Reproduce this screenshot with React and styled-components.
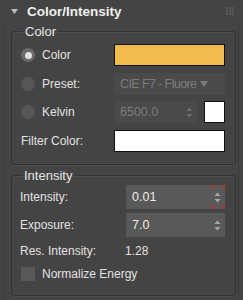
import React from "react"
import styled, { createGlobalStyle } from "styled-components"

const GlobalStyle = createGlobalStyle`
  html, body {
    margin: 0;
    padding: 0;
    background: #444444;
    font-family: "Liberation Sans", Arial, sans-serif;
  }
`

const Rollout = styled.div`
  width: 243px;
  height: 300px;
  background: #444444;
  color: #e2e2e2;
  font-size: 12px;
  box-sizing: border-box;
  overflow: hidden;
`

const Header = styled.div`
  height: 22px;
  display: flex;
  align-items: center;
  padding: 0 9px 0 11px;
  gap: 9px;
  font-weight: bold;
  font-size: 13.5px;
  color: #f0f0f0;
`

const Title = styled.span`
  flex: 1;
`

const Body = styled.div`
  margin: 0 4px;
  border-left: 1px solid #3b3b3b;
  border-right: 1px solid #3b3b3b;
  padding: 3px 2px 0 6px;
  display: flex;
  flex-direction: column;
  gap: 4px;
  height: 278px;
  box-sizing: border-box;
`

const Group = styled.fieldset`
  margin: 0;
  border: 1px solid #333333;
  border-radius: 3px;
  box-shadow: 0 1px 0 #4e4e4e, inset 0 1px 0 #4e4e4e;
  padding: ${p => p.$pad};
  display: flex;
  flex-direction: column;
  gap: ${p => p.$gap}px;
  min-width: 0;
`

const Legend = styled.legend`
  padding: 0 3px 0 2px;
  margin-left: 2px;
  font-size: 13px;
  color: #e6e6e6;
  line-height: 13px;
`

const Row = styled.div`
  display: flex;
  align-items: center;
  height: ${p => p.$h || 22}px;
`

const Radio = styled.span`
  width: 14px;
  height: 14px;
  border-radius: 50%;
  background: ${p => (p.$on ? "#6a6a6a" : "#565656")};
  display: flex;
  align-items: center;
  justify-content: center;
  margin-right: 7px;
  flex: none;

  &::after {
    content: "";
    width: 7px;
    height: 7px;
    border-radius: 50%;
    background: ${p => (p.$on ? "#e4e4e4" : "transparent")};
  }
`

const Label = styled.span`
  width: ${p => p.$w}px;
  flex: none;
  white-space: nowrap;
`

const Swatch = styled.div`
  width: ${p => p.$w}px;
  height: 22px;
  box-sizing: border-box;
  border: 1px solid #111111;
  background: ${p => p.$color};
  flex: none;
  margin-left: ${p => p.$ml || 0}px;
`

const Field = styled.div`
  position: relative;
  width: ${p => p.$w}px;
  height: ${p => p.$h || 22}px;
  box-sizing: border-box;
  background: ${p => (p.$disabled ? "#4a4a4a" : "#595959")};
  color: ${p => (p.$disabled ? "#7c7c7c" : "#ececec")};
  display: flex;
  align-items: center;
  padding-left: 6px;
  font-size: 12.5px;
  overflow: hidden;
  white-space: nowrap;
  flex: none;
`

const FieldText = styled.span`
  flex: 1;
  overflow: hidden;
  letter-spacing: ${p => p.$ls || 0}px;
`

const Arrows = styled.svg`
  flex: none;
  margin: 0 4px 0 3px;
`

const DropArrow = styled.svg`
  flex: none;
  margin: 0 17px 0 2px;
`

const Marker = styled.svg`
  position: absolute;
  right: 0;
  top: 0;
`

const Check = styled.span`
  width: 14px;
  height: 14px;
  background: #595959;
  margin: 0 7px 0 1px;
  flex: none;
`

const Spin = ({ color = "#a8a8a8" }) => (
  <Arrows width="7" height="11" viewBox="0 0 7 11">
    <path d="M3.5 0.5 L6.5 4 L0.5 4 Z" fill={color} />
    <path d="M0.5 7 L6.5 7 L3.5 10.5 Z" fill={color} />
  </Arrows>
)

const App = () => (
  <>
    <GlobalStyle />
    <Rollout>
      <Header>
        <svg width="7" height="5" viewBox="0 0 7 5">
          <path d="M0 0 H7 L3.5 5 Z" fill="#bdbdbd" />
        </svg>
        <Title>Color/Intensity</Title>
        <svg width="8" height="8" viewBox="0 0 8 8">
          <rect width="8" height="8" fill="#555" />
          <path d="M0 2.5 H8 M0 5.5 H8 M2.5 0 V8 M5.5 0 V8" stroke="#4a4a4a" />
        </svg>
      </Header>
      <Body>
        <Group $pad="6px 10px 12px 9px" $gap={6.7}>
          <Legend>Color</Legend>
          <Row>
            <Radio $on />
            <Label $w={72}>Color</Label>
            <Swatch $w={111} $color="#f2bb4d" />
          </Row>
          <Row>
            <Radio />
            <Label $w={72}>Preset:</Label>
            <Field $w={111} $disabled>
              <FieldText $ls={-0.6}>CIE F7 - Fluore</FieldText>
              <DropArrow width="8" height="6" viewBox="0 0 8 6">
                <path d="M0 0 H8 L4 6 Z" fill="#7a7a7a" />
              </DropArrow>
            </Field>
          </Row>
          <Row>
            <Radio />
            <Label $w={72}>Kelvin</Label>
            <Field $w={83} $disabled>
              <FieldText>6500.0</FieldText>
              <Spin color="#6e6e6e" />
            </Field>
            <Swatch $w={21} $ml={7} $color="#ffffff" />
          </Row>
          <Row>
            <Label $w={93}>Filter Color:</Label>
            <Swatch $w={111} $color="#ffffff" />
          </Row>
        </Group>
        <Group $pad="3px 10px 11px 8px" $gap={4}>
          <Legend>Intensity</Legend>
          <Row $h={24}>
            <Label $w={106}>Intensity:</Label>
            <Field $w={99} $h={24}>
              <FieldText>0.01</FieldText>
              <Spin />
              <Marker width="14" height="24" viewBox="0 0 14 24">
                <path
                  d="M1 4 V1 H4 M10 1 H13 V4 M13 20 V23 H10 M4 23 H1 V20"
                  fill="none"
                  stroke="#e02020"
                  strokeWidth="1.2"
                />
              </Marker>
            </Field>
          </Row>
          <Row $h={24}>
            <Label $w={106}>Exposure:</Label>
            <Field $w={99} $h={24}>
              <FieldText>7.0</FieldText>
              <Spin />
            </Field>
          </Row>
          <Row $h={19}>
            <Label $w={105}>Res. Intensity:</Label>
            <span>1.28</span>
          </Row>
          <Row $h={20}>
            <Check />
            <span>Normalize Energy</span>
          </Row>
        </Group>
      </Body>
    </Rollout>
  </>
)

export default App
